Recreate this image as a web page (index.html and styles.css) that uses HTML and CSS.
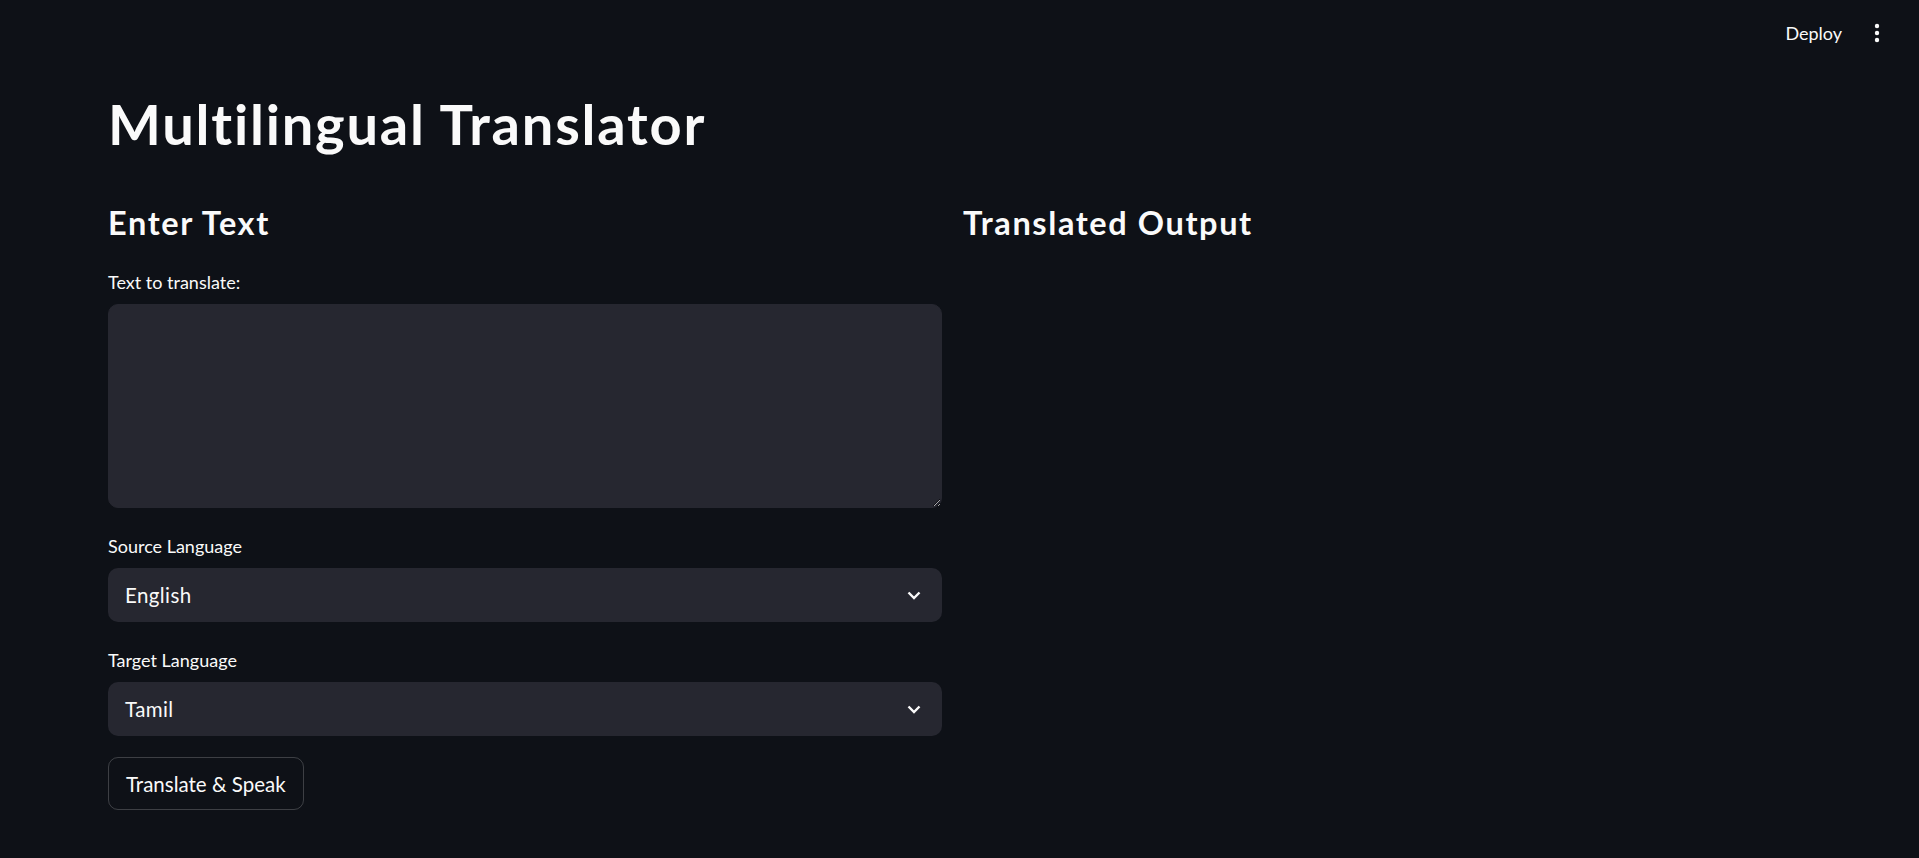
FILE: index.html
```html
<!DOCTYPE html>
<html lang="en">
<head>
<meta charset="utf-8">
<title>Multilingual Translator</title>
<link rel="stylesheet" href="styles.css">
</head>
<body>
<header class="topbar">
  <button class="deploy">Deploy</button>
  <button class="menu" aria-label="Main menu">
    <svg width="6" height="20" viewBox="0 0 6 20"><circle cx="3" cy="3" r="2.2" fill="#fafafa"/><circle cx="3" cy="10" r="2.2" fill="#fafafa"/><circle cx="3" cy="17" r="2.2" fill="#fafafa"/></svg>
  </button>
</header>
<main class="main">
  <h1 class="title">Multilingual Translator</h1>
  <div class="columns">
    <section class="col">
      <h3 class="subheader">Enter Text</h3>
      <div class="widget">
        <label class="label" for="src">Text to translate:</label>
        <textarea id="src" class="textarea"></textarea>
      </div>
      <div class="widget">
        <div class="label">Source Language</div>
        <div class="select">
          <span class="select-value">English</span>
          <svg class="chevron" width="14" height="9" viewBox="0 0 14 9"><polyline points="1.5,1.5 7,7 12.5,1.5" fill="none" stroke="#fafafa" stroke-width="2.4"/></svg>
        </div>
      </div>
      <div class="widget">
        <div class="label">Target Language</div>
        <div class="select">
          <span class="select-value">Tamil</span>
          <svg class="chevron" width="14" height="9" viewBox="0 0 14 9"><polyline points="1.5,1.5 7,7 12.5,1.5" fill="none" stroke="#fafafa" stroke-width="2.4"/></svg>
        </div>
      </div>
      <div class="widget">
        <button class="btn">Translate &amp; Speak</button>
      </div>
    </section>
    <section class="col">
      <h3 class="subheader">Translated Output</h3>
    </section>
  </div>
</main>
</body>
</html>
```
FILE: styles.css
```css
* { box-sizing: border-box; }
html, body {
  margin: 0;
  padding: 0;
  background: #0e1117;
  color: #fafafa;
  font-family: "Lato", "Noto Sans", sans-serif;
}
body { min-height: 858px; }

.topbar {
  height: 66px;
  display: flex;
  justify-content: flex-end;
  align-items: center;
  padding-right: 39px;
  gap: 32px;
}
.deploy {
  background: transparent;
  border: none;
  color: #fafafa;
  font-family: inherit;
  font-size: 18px;
  padding: 0;
  cursor: pointer;
}
.menu {
  background: transparent;
  border: none;
  padding: 0;
  display: flex;
  align-items: center;
  height: 22px;
}

.main {
  padding: 24px 122px 0 108px;
  display: flex;
  flex-direction: column;
  gap: 21px;
}
.title {
  margin: 0;
  font-size: 56px;
  line-height: 67px;
  font-weight: 700;
  letter-spacing: 1.8px;
  font-variant-ligatures: none;
}
.columns {
  display: grid;
  grid-template-columns: 1fr 1fr;
  column-gap: 21px;
}
.col {
  display: flex;
  flex-direction: column;
  gap: 21px;
}
.subheader {
  margin: 0;
  padding: 25px 0 2px;
  font-size: 32.5px;
  line-height: 39px;
  font-weight: 700;
  letter-spacing: 1.6px;
}
.widget {
  display: flex;
  flex-direction: column;
}
.label {
  display: block;
  padding-top: 6px;
  margin-bottom: 11px;
  font-size: 18px;
  line-height: 22px;
}
.textarea {
  width: 100%;
  height: 204px;
  background: #262730;
  border: 1px solid #262730;
  border-radius: 10px;
  color: #fafafa;
  font-family: inherit;
  font-size: 20px;
  padding: 12px 18px;
  resize: vertical;
  outline: none;
}
.select {
  height: 54px;
  background: #262730;
  border-radius: 10px;
  display: flex;
  align-items: center;
  justify-content: space-between;
  padding: 0 21px 0 17px;
}
.select-value {
  font-size: 20.5px;
  line-height: 24px;
  letter-spacing: 0.4px;
}
.chevron { display: block; }
.btn {
  align-self: flex-start;
  height: 53px;
  padding: 0 17px;
  background: transparent;
  border: 1px solid rgba(250, 250, 250, 0.2);
  border-radius: 10px;
  color: #fafafa;
  font-family: inherit;
  font-size: 20.5px;
}
```
